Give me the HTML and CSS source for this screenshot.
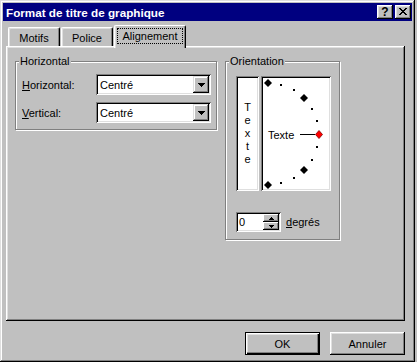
FILE: index.html
```html
<!DOCTYPE html>
<html lang="fr">
<head>
  <meta charset="UTF-8" />
  <title>Format de titre de graphique</title>
  <link rel="stylesheet" href="styles.css">
</head>
<body>

<div class="window">
  <div class="titlebar">
    <span class="title">Format de titre de graphique</span>
    <div class="title-buttons">
      <button class="tbtn help">?</button>
      <button class="tbtn close">
        <svg width="8" height="7" viewBox="0 0 8 7" shape-rendering="crispEdges">
          <path d="M0 0h2v1H0zM6 0h2v1H6zM1 1h2v1H1zM5 1h2v1H5zM2 2h4v1H2zM3 3h2v1H3zM2 4h4v1H2zM1 5h2v1H1zM5 5h2v1H5zM0 6h2v1H0zM6 6h2v1H6z" fill="#000"/>
        </svg>
      </button>
    </div>
  </div>

  <div class="tabs">
    <div class="tab">Motifs</div>
    <div class="tab">Police</div>
    <div class="tab active"><span class="focus">Alignement</span></div>
  </div>

  <div class="panel">
    <div class="group group-horizontal">
      <span class="legend">Horizontal</span>
      <div class="row">
        <label class="field-label"><u>H</u>orizontal:</label>
        <div class="combo">
          <span class="combo-value">Centré</span>
          <span class="combo-btn">
            <svg width="7" height="4" viewBox="0 0 7 4" shape-rendering="crispEdges"><path d="M0 0h7v1H0zM1 1h5v1H1zM2 2h3v1H2zM3 3h1v1H3z" fill="#000"/></svg>
          </span>
        </div>
      </div>
      <div class="row">
        <label class="field-label"><u>V</u>ertical:</label>
        <div class="combo">
          <span class="combo-value">Centré</span>
          <span class="combo-btn">
            <svg width="7" height="4" viewBox="0 0 7 4" shape-rendering="crispEdges"><path d="M0 0h7v1H0zM1 1h5v1H1zM2 2h3v1H2zM3 3h1v1H3z" fill="#000"/></svg>
          </span>
        </div>
      </div>
    </div>

    <div class="group group-orientation">
      <span class="legend">Orientation</span>
      <div class="orient">
        <div class="sunken vtext">
          <span>T</span><span>e</span><span>x</span><span>t</span><span>e</span>
        </div>
        <div class="sunken dial">
          <svg width="66" height="111" viewBox="0 0 66 111">
            <g fill="#000" shape-rendering="crispEdges">
              <rect x="17" y="6" width="2" height="2"/>
              <rect x="30" y="11" width="2" height="2"/>
              <rect x="48" y="30" width="2" height="2"/>
              <rect x="53" y="42" width="2" height="2"/>
              <rect x="53" y="68" width="2" height="2"/>
              <rect x="48" y="81" width="2" height="2"/>
              <rect x="30" y="99" width="2" height="2"/>
              <rect x="17" y="104" width="2" height="2"/>
            </g>
            <g fill="#000">
              <polygon points="5,1 9,5 5,9 1,5"/>
              <polygon points="41,16 45,20 41,24 37,20"/>
              <polygon points="41,88 45,92 41,96 37,92"/>
              <polygon points="5,103 9,107 5,111 1,107"/>
            </g>
            <line x1="37" y1="56.5" x2="52" y2="56.5" stroke="#000" stroke-width="1"/>
            <polygon points="56,52.5 59.5,56.5 56,60.5 52.5,56.5" fill="#f00" stroke="#800000" stroke-width="0.8"/>
            <text x="5" y="60.5" class="dial-text">Texte</text>
          </svg>
        </div>
      </div>
      <div class="spin-row">
        <div class="spin">
          <span class="spin-value">0</span>
          <div class="spin-btns">
            <span class="spin-btn">
              <svg width="5" height="3" viewBox="0 0 5 3" shape-rendering="crispEdges"><path d="M2 0h1v1H2zM1 1h3v1H1zM0 2h5v1H0z" fill="#000"/></svg>
            </span>
            <span class="spin-btn">
              <svg width="5" height="3" viewBox="0 0 5 3" shape-rendering="crispEdges"><path d="M0 0h5v1H0zM1 1h3v1H1zM2 2h1v1H2z" fill="#000"/></svg>
            </span>
          </div>
        </div>
        <span class="spin-label"><u>d</u>egrés</span>
      </div>
    </div>
  </div>

  <div class="actions">
    <button class="btn default">OK</button>
    <button class="btn">Annuler</button>
  </div>
</div>

</body>
</html>
```

FILE: styles.css
```css
* {
  box-sizing: border-box;
}

body {
  margin: 0;
  background-color: #c0c0c0;
  font-family: "Liberation Sans", Arial, sans-serif;
  font-size: 11px;
  color: #000;
}

.window {
  width: 415px;
  height: 362px;
  padding: 3px;
  background-color: #c0c0c0;
  box-shadow: inset -1px -1px #000, inset 1px 1px #dfdfdf,
              inset -2px -2px #808080, inset 2px 2px #fff;
  display: flex;
  flex-direction: column;
}

/* title bar */
.titlebar {
  height: 18px;
  background-color: #000080;
  display: flex;
  align-items: center;
  justify-content: space-between;
  padding: 0 1px 0 3px;
}

.title {
  color: #fff;
  font-weight: bold;
  font-size: 11.7px;
}

.title-buttons {
  display: flex;
  gap: 2px;
}

.tbtn {
  width: 16px;
  height: 14px;
  border: none;
  padding: 0;
  background-color: #c0c0c0;
  box-shadow: inset -1px -1px #000, inset 1px 1px #fff,
              inset -2px -2px #808080, inset 2px 2px #dfdfdf;
  display: flex;
  align-items: center;
  justify-content: center;
  font-family: "Liberation Sans", Arial, sans-serif;
}

.tbtn.help {
  font-weight: bold;
  font-size: 12px;
  line-height: 12px;
  padding-bottom: 1px;
}

.tbtn.close svg {
  margin-top: -1px;
}

/* tabs */
.tabs {
  height: 23px;
  margin-top: 2px;
  padding-left: 5px;
  display: flex;
  align-items: flex-end;
}

.tab {
  width: 52px;
  height: 19px;
  padding-top: 1px;
  margin-right: 1px;
  display: flex;
  align-items: center;
  justify-content: center;
  background-color: #c0c0c0;
  border-top: 1px solid #fff;
  border-left: 1px solid #fff;
  border-right: 1px solid #000;
  border-radius: 2px 2px 0 0;
  box-shadow: inset -1px 0 #808080, inset 1px 1px #dfdfdf;
}

.tab.active {
  width: 72px;
  height: 23px;
  padding-top: 0;
  padding-bottom: 2px;
  margin-bottom: -2px;
  position: relative;
  z-index: 1;
  box-shadow: inset -1px 0 #808080, inset 1px 0 #dfdfdf;
}

.focus {
  border: 1px dotted #000;
  padding: 0 4px;
  line-height: 14px;
}

/* panel */
.panel {
  width: 399px;
  height: 275px;
  margin-left: 3px;
  padding: 15px 0 0 9px;
  display: flex;
  align-items: flex-start;
  gap: 8px;
  box-shadow: inset -1px -1px #000, inset 1px 1px #fff,
              inset -2px -2px #808080, inset 2px 2px #dfdfdf;
}

.group {
  position: relative;
  border: 1px solid #808080;
  box-shadow: inset 1px 1px #fff, 1px 1px #fff;
}

.legend {
  position: absolute;
  top: -7px;
  left: 3px;
  padding: 0 1px;
  line-height: 13px;
  background-color: #c0c0c0;
}

.group-horizontal {
  width: 202px;
  height: 69px;
  padding: 12px 5px 0 6px;
  display: flex;
  flex-direction: column;
  gap: 7px;
}

.row {
  height: 21px;
  display: flex;
  align-items: center;
}

.field-label {
  width: 74px;
}

.combo {
  width: 115px;
  height: 21px;
  padding: 2px;
  background-color: #fff;
  display: flex;
  align-items: center;
  box-shadow: inset 1px 1px #808080, inset -1px -1px #fff,
              inset 2px 2px #000, inset -2px -2px #dfdfdf;
}

.combo-value {
  padding-left: 2px;
}

.combo-btn {
  margin-left: auto;
  width: 16px;
  height: 17px;
  background-color: #c0c0c0;
  display: flex;
  align-items: center;
  justify-content: center;
  box-shadow: inset -1px -1px #000, inset 1px 1px #dfdfdf,
              inset -2px -2px #808080, inset 2px 2px #fff;
}

.combo-btn svg {
  margin-top: 1px;
}

/* orientation */
.group-orientation {
  width: 115px;
  height: 179px;
  padding: 14px 0 0 10px;
}

.orient {
  display: flex;
  gap: 2px;
}

.sunken {
  height: 115px;
  padding: 2px;
  background-color: #fff;
  box-shadow: inset 1px 1px #808080, inset -1px -1px #fff,
              inset 2px 2px #000, inset -2px -2px #dfdfdf;
}

.vtext {
  width: 23px;
  display: flex;
  flex-direction: column;
  align-items: center;
  justify-content: center;
  line-height: 13px;
}

.dial {
  width: 70px;
}

.dial svg {
  display: block;
}

.dial-text {
  font-family: "Liberation Sans", Arial, sans-serif;
  font-size: 11px;
  fill: #000;
}

.spin-row {
  margin-top: 21px;
  display: flex;
  align-items: center;
}

.spin {
  width: 45px;
  height: 20px;
  padding: 2px;
  background-color: #fff;
  display: flex;
  align-items: center;
  box-shadow: inset 1px 1px #808080, inset -1px -1px #fff,
              inset 2px 2px #000, inset -2px -2px #dfdfdf;
}

.spin-value {
  padding-left: 1px;
}

.spin-btns {
  margin-left: auto;
  width: 16px;
  height: 16px;
  display: flex;
  flex-direction: column;
}

.spin-btn {
  height: 8px;
  background-color: #c0c0c0;
  display: flex;
  align-items: center;
  justify-content: center;
  box-shadow: inset -1px -1px #000, inset 1px 1px #fff,
              inset -2px -2px #808080;
}

.spin-label {
  margin-left: 5px;
}

/* bottom buttons */
.actions {
  margin-top: 11px;
  padding-right: 7px;
  display: flex;
  justify-content: flex-end;
  gap: 10px;
}

.btn {
  width: 75px;
  height: 23px;
  border: none;
  padding: 0;
  background-color: #c0c0c0;
  font-family: "Liberation Sans", Arial, sans-serif;
  font-size: 11px;
  color: #000;
  box-shadow: inset -1px -1px #000, inset 1px 1px #fff,
              inset -2px -2px #808080, inset 2px 2px #dfdfdf;
}

.btn.default {
  box-shadow: inset 0 0 0 1px #000, inset 2px 2px #fff,
              inset -2px -2px #000, inset -3px -3px #808080,
              inset 3px 3px #dfdfdf;
}
```
